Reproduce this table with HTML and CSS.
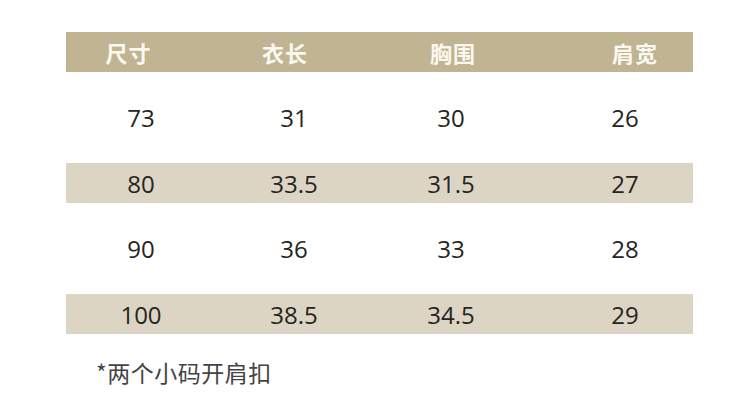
FILE: index.html
```html
<!DOCTYPE html>
<html lang="zh">
<head>
<meta charset="utf-8">
<title>尺码表</title>
<link rel="stylesheet" href="styles.css">
</head>
<body>
<div class="page">
  <div class="table">
    <div class="row head">
      <div class="cell h1">尺寸</div>
      <div class="cell h2">衣长</div>
      <div class="cell h3">胸围</div>
      <div class="cell h4">肩宽</div>
    </div>
    <div class="row tall">
      <div class="cell">73</div>
      <div class="cell">31</div>
      <div class="cell">30</div>
      <div class="cell c4">26</div>
    </div>
    <div class="row band">
      <div class="cell">80</div>
      <div class="cell">33.5</div>
      <div class="cell">31.5</div>
      <div class="cell c4">27</div>
    </div>
    <div class="row tall">
      <div class="cell">90</div>
      <div class="cell">36</div>
      <div class="cell">33</div>
      <div class="cell c4">28</div>
    </div>
    <div class="row band">
      <div class="cell">100</div>
      <div class="cell">38.5</div>
      <div class="cell">34.5</div>
      <div class="cell c4">29</div>
    </div>
  </div>
  <p class="note">*两个小码开肩扣</p>
</div>
</body>
</html>
```

FILE: styles.css
```css
html, body {
  margin: 0;
  padding: 0;
  background: #ffffff;
}

.page {
  padding: 32px 0 0 66px;
}

.table {
  width: 627px;
}

.row {
  display: grid;
  grid-template-columns: 150px 156px 158px 163px;
  align-items: center;
}

.cell {
  text-align: center;
  font-family: "Open Sans", "Noto Sans", sans-serif;
  font-size: 24px;
  color: #262421;
}

.head {
  height: 40px;
  background: #c1b492;
}

.head .cell {
  font-family: "Noto Sans CJK SC", sans-serif;
  font-weight: 700;
  font-size: 22px;
  letter-spacing: 1px;
  color: #fbf8ef;
}

.h1 { padding-right: 25px; }
.h2 { padding-right: 18px; }
.h3 { padding-left: 4px; }
.h4 { padding-left: 47px; }

.c4 { padding-left: 27px; }

.tall {
  height: 91px;
  background: #ffffff;
}

.band {
  height: 40px;
  background: #ddd5c3;
}

.note {
  margin: 23px 0 0 30px;
  font-family: "Noto Sans CJK SC", sans-serif;
  font-size: 23px;
  letter-spacing: 0.5px;
  line-height: 30px;
  color: #444444;
}
```
